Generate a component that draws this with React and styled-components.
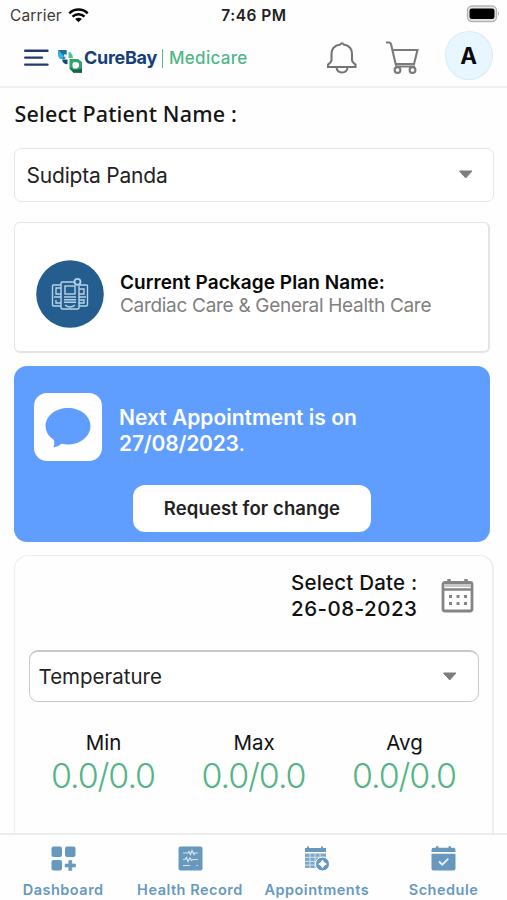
import React from "react";
import styled, { createGlobalStyle } from "styled-components";

const GlobalStyle = createGlobalStyle`
  * { box-sizing: border-box; }
  body { margin: 0; background: #fefefe; }
`;

const Screen = styled.div`
  width: 507px;
  height: 900px;
  display: flex;
  flex-direction: column;
  overflow: hidden;
  background: #fefefe;
  color: #111;
  font-family: Inter, "Liberation Sans", sans-serif;
  white-space: nowrap;
`;

const StatusBar = styled.div`
  height: 30px;
  flex: none;
  display: grid;
  grid-template-columns: 1fr auto 1fr;
  align-items: center;
  padding: 0 7px 0 10px;
  font-size: 15.5px;
`;

const Carrier = styled.div`
  display: flex;
  align-items: center;
  gap: 6px;
  color: #3a3a3a;
  letter-spacing: 0.15px;
`;

const Clock = styled.div`
  font-weight: 600;
  font-size: 15.5px;
  letter-spacing: 0.5px;
  margin-right: 2px;
  color: #222;
`;

const BatterySlot = styled.div`
  display: flex;
  justify-content: flex-end;
  margin-top: -2px;
`;

const Header = styled.header`
  height: 58px;
  flex: none;
  display: flex;
  align-items: flex-start;
  padding: 1px 14px 0 23.5px;
  border-bottom: 2px solid #f0f0f1;
`;

const MenuIcon = styled.svg`
  margin-top: 17px;
`;

const Brand = styled.div`
  display: flex;
  align-items: flex-start;
  margin-left: 9.5px;
`;

const BrandMark = styled.svg`
  margin-top: 17px;
`;

const BrandName = styled.span`
  margin: 15px 0 0 1px;
  font-weight: 700;
  font-size: 18px;
  line-height: 24px;
  width: 73px;
  letter-spacing: -0.3px;
  color: #17407a;
`;

const BrandRule = styled.span`
  width: 1px;
  height: 19px;
  margin: 18px 6px 0 5px;
  background: #55bd8c;
`;

const BrandProduct = styled.span`
  margin-top: 15px;
  font-weight: 500;
  font-size: 17px;
  line-height: 24px;
  letter-spacing: 0.3px;
  color: #50b787;
`;

const Actions = styled.div`
  display: flex;
  margin-left: auto;
`;

const BellIcon = styled.svg`
  margin: 9px 27px 0 0;
`;

const CartIcon = styled.svg`
  margin: 8px 26px 0 0;
`;

const Avatar = styled.div`
  width: 48.5px;
  height: 49px;
  border-radius: 50%;
  border: 1px solid #dbeaf3;
  background: #e8f7ff;
  display: grid;
  place-items: center;
  font-weight: 700;
  font-size: 22.5px;
  color: #0a0a0a;
`;

const Content = styled.main`
  flex: 1;
  min-height: 0;
  overflow: hidden;
  display: flex;
  flex-direction: column;
  padding: 0 13px 0 14px;
`;

const FieldLabel = styled.h2`
  margin: 11px 0 19px 0.5px;
  font-family: "Noto Sans", sans-serif;
  font-weight: 500;
  font-size: 21.5px;
  letter-spacing: 0.17px;
  line-height: 30px;
  color: #151515;
`;

const Select = styled.div`
  flex: none;
  display: flex;
  align-items: center;
  justify-content: space-between;
  height: ${(p) => p.$height}px;
  padding: 0 ${(p) => p.$padRight}px 0 ${(p) => p.$padLeft}px;
  border: 1.5px solid ${(p) => p.$border};
  border-top-width: ${(p) => p.$topWidth || 1}px;
  border-radius: ${(p) => p.$radius}px;
  background: #fff;
  font-size: ${(p) => p.$size}px;
  letter-spacing: ${(p) => p.$tracking}px;
  color: #222;
`;

const PlanCard = styled.section`
  flex: none;
  width: 476px;
  height: 131px;
  margin-top: 20px;
  padding: 14px 0 0 21px;
  border: 2px solid #e4e4e6;
  border-width: 1px 2px 2px 1px;
  border-radius: 6px;
  background: #fff;
  display: flex;
  align-items: center;
`;

const PlanText = styled.div`
  margin-left: 16px;
`;

const PlanTitle = styled.div`
  font-weight: 600;
  font-size: 19px;
  line-height: 23px;
  letter-spacing: 0.08px;
  color: #080808;
`;

const PlanName = styled.div`
  font-size: 19px;
  line-height: 23px;
  letter-spacing: -0.3px;
  color: #808080;
`;

const AppointmentCard = styled.section`
  flex: none;
  width: 476px;
  height: 176px;
  margin-top: 13px;
  padding: 27px 20px 0;
  border-radius: 13px;
  background: #5f9dff;
  display: flex;
  flex-direction: column;
`;

const AppointmentInfo = styled.div`
  display: flex;
`;

const ChatTile = styled.div`
  width: 68px;
  height: 68px;
  border-radius: 13px;
  background: #fff;
  display: grid;
  place-items: center;
`;

const AppointmentText = styled.div`
  margin: 12px 0 0 17px;
  color: #fff;
  font-weight: 600;
  font-size: 21px;
  line-height: 25.5px;
`;

const AppointmentDate = styled.span`
  display: block;
  letter-spacing: -0.2px;
`;

const Period = styled.span`
  font-weight: 400;
`;

const RequestButton = styled.button`
  align-self: center;
  width: 238px;
  height: 47px;
  margin-top: 24px;
  padding: 0 0 2px;
  border: 0;
  border-radius: 12px;
  background: #fff;
  color: #222;
  font: 600 18.5px Inter, "Liberation Sans", sans-serif;
  letter-spacing: 0.1px;
`;

const VitalsCard = styled.section`
  flex: none;
  height: 300px;
  margin-top: 13px;
  padding: 0 13px 0 14px;
  border: 2px solid #eeeeef;
  border-width: 1px 2px 1px 1px;
  border-radius: 14px;
`;

const DateRow = styled.div`
  display: flex;
  justify-content: flex-end;
  height: 94px;
  padding: 14px 5px 0 0;
`;

const DateText = styled.div`
  width: 127px;
  margin-right: 23px;
  font-weight: 500;
  font-size: 20.5px;
  line-height: 25.5px;
  letter-spacing: 0.2px;
`;

const DateValue = styled.span`
  display: block;
  letter-spacing: 0.5px;
`;

const CalendarIcon = styled.svg`
  margin-top: 8px;
`;

const Readings = styled.div`
  display: grid;
  grid-template-columns: repeat(3, 150.5px);
  justify-content: center;
  margin-top: 28px;
  text-align: center;
`;

const ReadingLabel = styled.div`
  font-size: 20.5px;
  line-height: 26px;
`;

const ReadingValue = styled.div`
  margin-right: 1px;
  font-size: 34px;
  line-height: 40px;
  font-weight: 350;
  letter-spacing: -1.1px;
  color: #55b487;
`;

const TabBar = styled.nav`
  flex: none;
  height: 67px;
  border-top: 2px solid #ececee;
  display: grid;
  grid-template-columns: repeat(4, 126.8px);
  background: #fefefe;
`;

const Tab = styled.div`
  display: flex;
  flex-direction: column;
  align-items: center;
  padding: 11px 0 0 1px;
  color: #6799bf;
  font-weight: 600;
  font-size: 14.5px;
  line-height: 18px;
  letter-spacing: 0.5px;
`;

const TabLabel = styled.span`
  margin: 9px 1.5px 0 0;
`;

const Caret = () => (
  <svg width="16" height="10" viewBox="0 0 16 10">
    <path d="M1.5 1H14L7.7 8Z" fill="#7d7d7d" stroke="#7d7d7d" strokeLinejoin="round" />
  </svg>
);

const Wifi = () => (
  <svg width="21" height="15" viewBox="0 0 21 15" fill="none" stroke="#050505" strokeWidth="2.5">
    <path d="M1.3 5.3C6.4.2 14.6.2 19.7 5.3M4.5 8.7C7.9 5.4 13.1 5.4 16.5 8.7" />
    <path d="M10.5 14.2L7.2 11C9 9.4 12 9.4 13.8 11Z" fill="#050505" stroke="none" />
  </svg>
);

const Battery = () => (
  <svg width="34" height="18" viewBox="0 0 34 18">
    <rect x="1.5" y="1" width="29" height="15.5" rx="4.5" fill="#e6e6e6" stroke="#b4b4b4" strokeWidth="1.3" />
    <rect x="3.5" y="3.5" width="25" height="10.5" rx="2.3" fill="#000" />
    <path d="M32 6.5Q34 8.7 32 11Z" fill="#aaa" />
  </svg>
);

const PlanIcon = () => (
  <svg width="68" height="68" viewBox="0 0 68 68">
    <circle cx="34" cy="34" r="33.8" fill="#245d8e" />
    <g fill="none" stroke="#b5d3e9" strokeWidth="1.4">
      <path d="M25 25H17.5Q16.5 25 16.5 26V45Q16.5 46 17.5 46H25M43 25H50Q51.5 25 51.5 26V45Q51.5 46 50 46H43" />
      <path d="M25 28H20V34H25M18 37H25M20 40V43H25M43 29H48V34H43M43 37H50M43 40H48V43H43" />
      <path d="M38 22H26.5Q25 22 25 23.5V47.5Q25 49 26.5 49H41.5Q43 49 43 47.5V26" />
      <rect x="29" y="26" width="10" height="8" />
      <path d="M28 37H40M28 39.7H40M28 42.3H40M29 45Q34 49 39 45" />
      <circle cx="41.5" cy="21.8" r="3" strokeWidth="1.8" />
    </g>
  </svg>
);

const TABS = [
  {
    label: "Dashboard",
    icon: (
      <g fill="#6799bf">
        <rect x="0.5" y="0.5" width="10.5" height="10.5" rx="2" />
        <rect x="14" y="0.5" width="10.5" height="10.5" rx="2" />
        <rect x="0.5" y="14" width="10.5" height="10.5" rx="2" />
        <path
          d="M17.8 14.5h3v3.5h3.700v3h-3.700v3.500h-3v-3.500h-3.700v-3h3.700z"
          stroke="#6799bf"
          strokeWidth=".6"
          strokeLinejoin="round"
        />
      </g>
    ),
  },
  {
    label: "Health Record",
    icon: (
      <g>
        <rect x="0.5" y="0.5" width="24" height="24" rx="2" fill="#6799bf" />
        <path
          d="M5 7H10L11 5.5 12.5 8.5 14 4.5 16 8.5 17 7H20M5 13.5H7L8.5 11.5 10 15.5 12 12 13.5 14.5 15 13.5H20M5 19.5H12M18.5 19.5H20"
          fill="none"
          stroke="#d7e6f0"
          strokeWidth="1.2"
        />
      </g>
    ),
  },
  {
    label: "Appointments",
    icon: (
      <g>
        <path d="M1 2H3V.5H5V2H17V.5H19V2H22V6H1Z" fill="#6799bf" />
        <path d="M1 7.5H22V15H1Z M1 15H14V22H1Z" fill="#7ba7c9" />
        <path d="M1 11.3H22M1 15.4H15M1 19H13M6 7V22M11 7V22M16 7V15" stroke="#d3e3ee" strokeWidth="1" />
        <circle cx="18.5" cy="18" r="7" fill="#6799bf" stroke="#fff" />
        <path d="M18.500 14.200L19.900 16.600 22.300 18 19.900 19.400 18.500 21.800 17.100 19.400 14.700 18 17.100 16.600Z" fill="#fff" stroke="#fff" strokeLinejoin="round" />
      </g>
    ),
  },
  {
    label: "Schedule",
    icon: (
      <g>
        <path d="M2.5 1.8H5V.3H7.5V1.8H17.5V.3H20V1.8H22.5Q24.5 1.8 24.5 4V6H.5V4Q.5 1.8 2.5 1.8Z" fill="#6799bf" />
        <path d="M.5 7.8H24.5V22.5Q24.5 24.5 22.5 24.5H2.5Q.5 24.5 .5 22.5Z" fill="#6799bf" />
        <path d="M8 15.5L11.3 18.7 17.3 12.7" fill="none" stroke="#e8f1f7" strokeWidth="1.9" />
      </g>
    ),
  },
];

const READINGS = [
  ["Min", "0.0/0.0"],
  ["Max", "0.0/0.0"],
  ["Avg", "0.0/0.0"],
];

export default function App() {
  return (
    <Screen>
      <GlobalStyle />
      <StatusBar>
        <Carrier>
          Carrier <Wifi />
        </Carrier>
        <Clock>7:46 PM</Clock>
        <BatterySlot>
          <Battery />
        </BatterySlot>
      </StatusBar>

      <Header>
        <MenuIcon width="25" height="20" viewBox="0 0 25 20" stroke="#24386d" strokeWidth="2.4" strokeLinecap="round">
          <path d="M1.2 2.8H23.5M1.2 9.6H18M1.2 16.6H23.5" />
        </MenuIcon>
        <Brand>
          <BrandMark width="25" height="27" viewBox="0 0 25 27">
            <path d="M.3 2H8.700V8.500L6.500 11H3Q.3 10 .3 7Z" fill="#1f6ea3" />
            <path d="M.3 2L6 8 4.500 11H3Q.3 10 .3 7Z" fill="#35b4df" />
            <path d="M6 6.500H8.700V9L6.500 9.500Z" fill="#fff" />
            <path d="M4 11.500H9.500V16.300Q5 16.500 4 11.500Z" fill="#174c79" />
            <path d="M10.500 3.500Q14.500 4.500 15 10H10.500Z" fill="#4fc78c" />
            <path d="M11.500 11H20L24 14V24.700H15.500L11.500 21Z" fill="#2fa56c" />
            <path d="M11.500 19L15.500 24.700H24V20.500L20 21.500H15Z" fill="#166447" />
            <path d="M15.500 14.200H19.500L21 15.500V18.500L19 20.500H15.500L14.500 18.500V15.500Z" fill="#fff" />
          </BrandMark>
          <BrandName>CureBay</BrandName>
          <BrandRule />
          <BrandProduct>Medicare</BrandProduct>
        </Brand>
        <Actions>
          <BellIcon width="32" height="36" viewBox="0 0 32 36" fill="none" stroke="#747474" strokeWidth="2.1">
            <path d="M14.2 4.5Q16 2 17.8 4.5Q26 6 26 14V20Q26 22 29.5 24.5V27H2V24.5Q5.5 22 5.5 20V14Q5.5 6 14.2 4.5Z" />
            <path d="M10.5 27.5Q11 32.5 16 32.5T21.5 27.5" />
          </BellIcon>
          <CartIcon width="34" height="36" viewBox="0 0 34 36" fill="none" stroke="#7a7a7a" strokeWidth="2.1">
            <path d="M1 3.5H4Q5.5 3.5 6 5L11 26.5M8 11H32.5L29 25H11M10.5 27.5H30" />
            <circle cx="12.5" cy="31" r="2.9" />
            <circle cx="27.5" cy="31" r="2.9" />
          </CartIcon>
          <Avatar>A</Avatar>
        </Actions>
      </Header>

      <Content>
        <FieldLabel>Select Patient Name :</FieldLabel>
        <Select $height={54} $padLeft={11.5} $padRight={19} $border="#e6e6e8" $radius={7} $size={21} $tracking={-0.2}>
          Sudipta Panda <Caret />
        </Select>

        <PlanCard>
          <PlanIcon />
          <PlanText>
            <PlanTitle>Current Package Plan Name:</PlanTitle>
            <PlanName>Cardiac Care &amp; General Health Care</PlanName>
          </PlanText>
        </PlanCard>

        <AppointmentCard>
          <AppointmentInfo>
            <ChatTile>
              <svg width="46" height="42" viewBox="0 0 46 42">
                <path
                  d="M23 2C35.5 2 45.5 10 45.5 20S35.5 38.5 23 38.5Q19.5 38.5 16.5 37.7Q13 41 8.5 41.5Q9.8 38 9 34Q.5 28.5 .5 20C.5 10 10.5 2 23 2Z"
                  fill="#5f9dff"
                />
              </svg>
            </ChatTile>
            <AppointmentText>
              Next Appointment is on
              <AppointmentDate>
                27/08/2023<Period>.</Period>
              </AppointmentDate>
            </AppointmentText>
          </AppointmentInfo>
          <RequestButton>Request for change</RequestButton>
        </AppointmentCard>

        <VitalsCard>
          <DateRow>
            <DateText>
              Select Date :<DateValue>26-08-2023</DateValue>
            </DateText>
            <CalendarIcon width="33" height="36" viewBox="0 0 33 36" fill="none" stroke="#858585">
              <rect x="2" y="4.5" width="29" height="28.5" rx="2" strokeWidth="2.8" />
              <path d="M2 11.5H31" strokeWidth="2.5" />
              <path d="M3 7.5H30" stroke="#c8c8c8" strokeWidth="3" />
              <path d="M8 1V6M25 1V6" strokeWidth="3.5" />
              <path d="M8 18.5H26M8 25.5H26" strokeWidth="3" strokeDasharray="3 4.5" />
            </CalendarIcon>
          </DateRow>
          <Select
            $height={52}
            $padLeft={8.5}
            $padRight={20}
            $border="#c9c9c9"
            $radius={9}
            $topWidth={2}
            $size={20.5}
            $tracking={0}
          >
            Temperature <Caret />
          </Select>
          <Readings>
            {READINGS.map(([label, value]) => (
              <div key={label}>
                <ReadingLabel>{label}</ReadingLabel>
                <ReadingValue>{value}</ReadingValue>
              </div>
            ))}
          </Readings>
        </VitalsCard>
      </Content>

      <TabBar>
        {TABS.map((tab) => (
          <Tab key={tab.label}>
            <svg width="26" height="26" viewBox="0 0 26 26">
              {tab.icon}
            </svg>
            <TabLabel>{tab.label}</TabLabel>
          </Tab>
        ))}
      </TabBar>
    </Screen>
  );
}
